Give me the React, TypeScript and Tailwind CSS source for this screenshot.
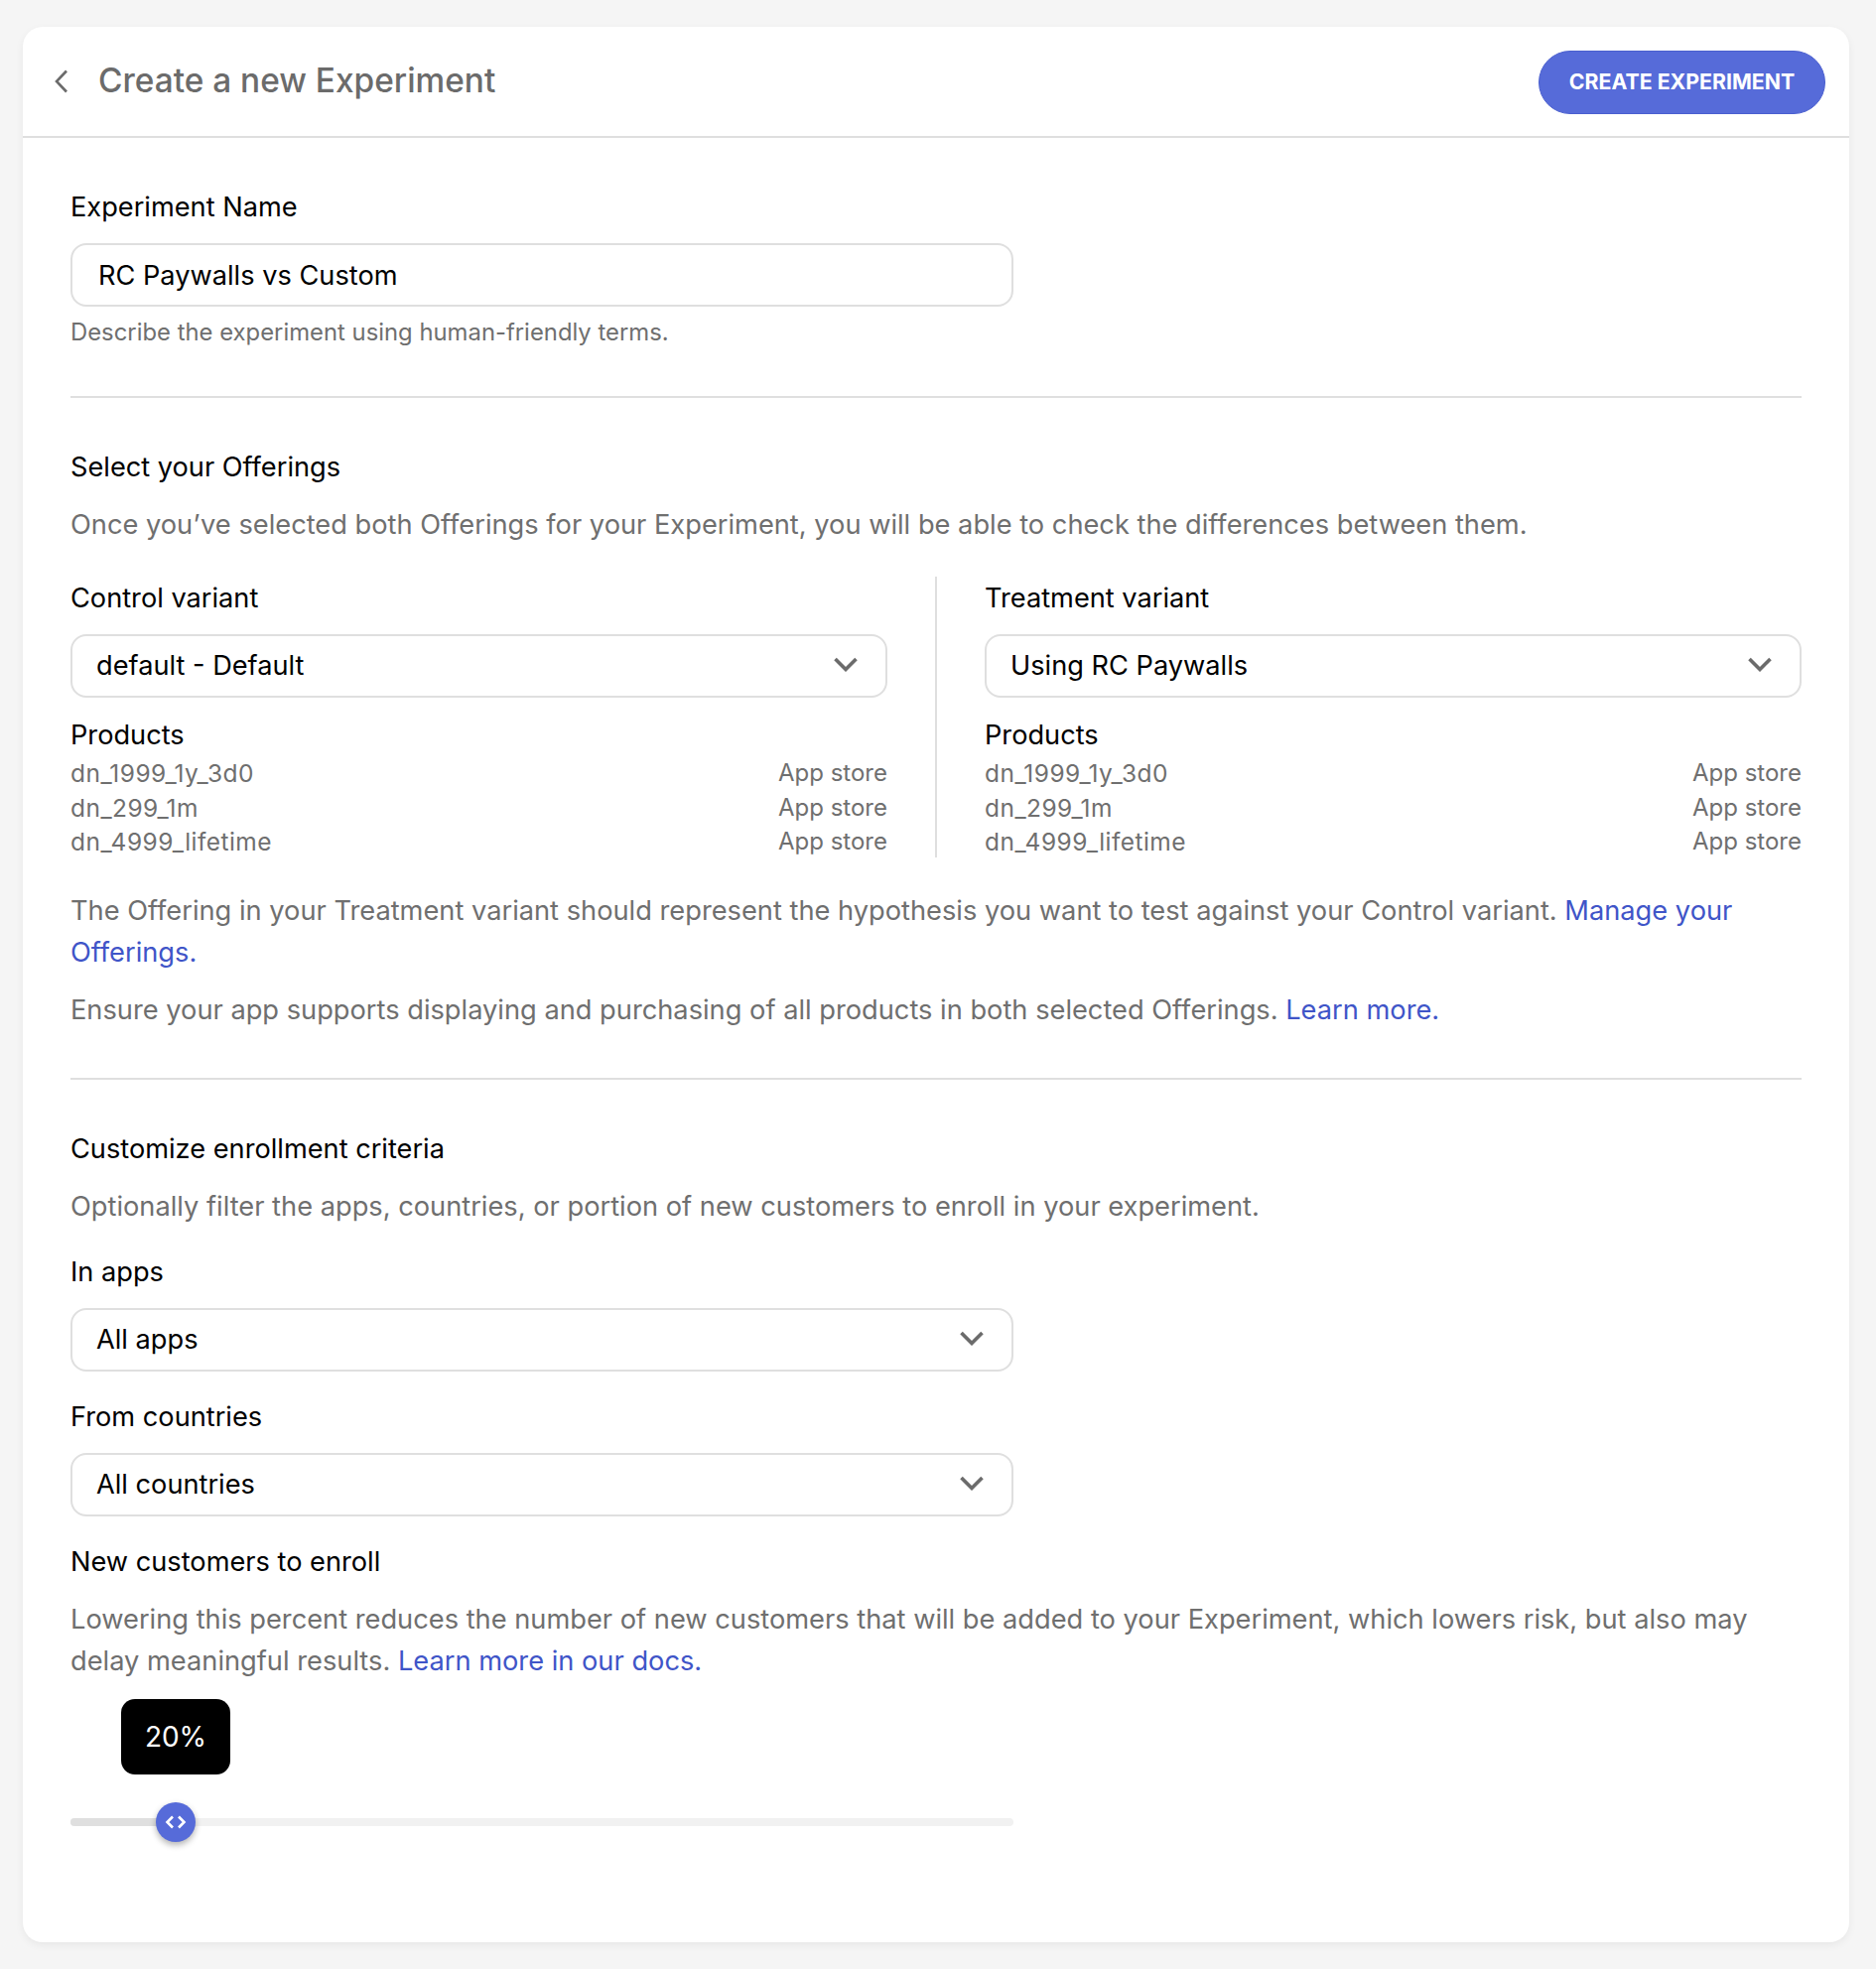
import React from "react";

const font = "font-['Inter',sans-serif]";

function Chevron() {
  return (
    <svg width="24" height="15" viewBox="0 0 24 15" fill="none" className="mb-[4px] shrink-0">
      <path d="M1.5 2L12 12.5L22.5 2" stroke="#6b6b6b" strokeWidth="3.6" />
    </svg>
  );
}

function Label({ children, className = "" }: { children: React.ReactNode; className?: string }) {
  return <div className={`pt-[1px] text-[27.2px] leading-[33px] text-black ${className}`}>{children}</div>;
}

function Para({ children, className = "" }: { children: React.ReactNode; className?: string }) {
  return <p className={`-mb-px pt-px text-[27.24px] leading-[42px] text-[#6f6f6f] ${className}`}>{children}</p>;
}

function Link({ children }: { children: React.ReactNode }) {
  return <span className="text-[#3f55c8]">{children}</span>;
}

function Select({ value, className = "" }: { value: string; className?: string }) {
  return (
    <div className={`flex h-16 items-center justify-between rounded-[16px] border-2 border-[#dfdfdf] pl-[24px] pr-[28px] ${className}`}>
      <span className="pt-[1px] text-[27.2px] text-black">{value}</span>
      <Chevron />
    </div>
  );
}

function Variant({ title, value }: { title: string; value: string }) {
  const rows = ["dn_1999_1y_3d0", "dn_299_1m", "dn_4999_lifetime"];
  return (
    <div className="flex-1 pt-1">
      <Label>{title}</Label>
      <Select value={value} className="mt-5" />
      <Label className="mt-5">Products</Label>
      <div className="mt-[5px]">
        {rows.map((r) => (
          <div key={r} className="flex justify-between text-[24px] leading-[34.5px] text-[#6f6f6f]">
            <span className="text-[24.5px] tracking-[0.45px]">{r}</span>
            <span>App store</span>
          </div>
        ))}
      </div>
    </div>
  );
}

export default function App() {
  return (
    <div className={`min-h-[1984px] bg-[#f5f5f5] pb-[27px] pl-[23px] pr-[27px] pt-[27px] ${font}`}>
      <div className="h-[1930px] rounded-[20px] bg-white shadow-[0_3px_8px_rgba(0,0,0,0.06)]">
        <header className="flex h-[112px] items-center justify-between border-b-2 border-[#dfdfdf] pl-[32px] pr-[24px]">
          <div className="flex items-center gap-[31px]">
            <svg width="13" height="24" viewBox="0 0 13 24" fill="none">
              <path d="M12 1.5L2 12L12 22.5" stroke="#6b6b6b" strokeWidth="2.6" />
            </svg>
            <h1 className="mb-[1px] text-[33.4px] font-medium text-[#6b6b6b]">Create a new Experiment</h1>
          </div>
          <button className="mt-[2px] flex h-16 w-[289px] items-center justify-center rounded-full border border-[#4a5fcf] bg-[#566bd9] text-[21.3px] font-bold text-white">
            CREATE EXPERIMENT
          </button>
        </header>

        <main className="px-12 pt-[52px]">
          <Label>Experiment Name</Label>
          <div className="mt-5 flex h-16 w-[950px] items-center rounded-[16px] border-2 border-[#dfdfdf] pl-[26px] pt-[3px] text-[27.2px] text-black">
            RC Paywalls vs Custom
          </div>
          <p className="mt-[11px] text-[23.85px] leading-[30px] text-[#6f6f6f]">Describe the experiment using human-friendly terms.</p>
          <hr className="mt-[49px] border-t-2 border-[#dfdfdf]" />

          <Label className="mt-[52px]">Select your Offerings</Label>
          <Para className="mt-5">
            Once you’ve selected both Offerings for your Experiment, you will be able to check the differences between them.
          </Para>
          <div className="mt-8 flex h-[283px]">
            <Variant title="Control variant" value="default - Default" />
            <div className="mx-[48px] w-[2px] bg-[#dfdfdf]" />
            <Variant title="Treatment variant" value="Using RC Paywalls" />
          </div>
          <Para className="mt-8">
            The Offering in your Treatment variant should represent the hypothesis you want to test against your Control variant. <Link>Manage your Offerings.</Link>
          </Para>
          <Para className="mt-4">
            Ensure your app supports displaying and purchasing of all products in both selected Offerings. <Link>Learn more.</Link>
          </Para>
          <hr className="mt-12 border-t-2 border-[#dfdfdf]" />

          <Label className="mt-[52px]">Customize enrollment criteria</Label>
          <Para className="mt-5">Optionally filter the apps, countries, or portion of new customers to enroll in your experiment.</Para>
          <Label className="mt-7">In apps</Label>
          <Select value="All apps" className="mt-5 w-[950px]" />
          <Label className="mt-7">From countries</Label>
          <Select value="All countries" className="mt-5 w-[950px]" />
          <Label className="mt-7">New customers to enroll</Label>
          <Para className="mt-5">
            Lowering this percent reduces the number of new customers that will be added to your Experiment, which lowers risk, but also may delay meaningful results. <Link>Learn more in our docs.</Link>
          </Para>

          <div className="relative mt-[18px] w-[950px] pt-[120px]">
            <div className="absolute left-[51px] top-0 flex h-[76px] w-[110px] items-center justify-center rounded-[14px] bg-black text-[28px] text-white">
              20%
            </div>
            <div className="h-2 rounded-full bg-[#f1f1f1]">
              <div className="h-2 w-[106px] rounded-full bg-[#dfdfdf]" />
            </div>
            <div className="absolute left-[86px] top-[104px] flex h-10 w-10 items-center justify-center rounded-full bg-[#566bd9] shadow-[0_3px_6px_rgba(0,0,0,0.3)]">
              <svg width="22" height="16" viewBox="0 0 22 16" fill="none">
                <path d="M8 2.5L2.5 8L8 13.5M14 2.5L19.5 8L14 13.5" stroke="white" strokeWidth="2.6" />
              </svg>
            </div>
          </div>
        </main>
      </div>
    </div>
  );
}
